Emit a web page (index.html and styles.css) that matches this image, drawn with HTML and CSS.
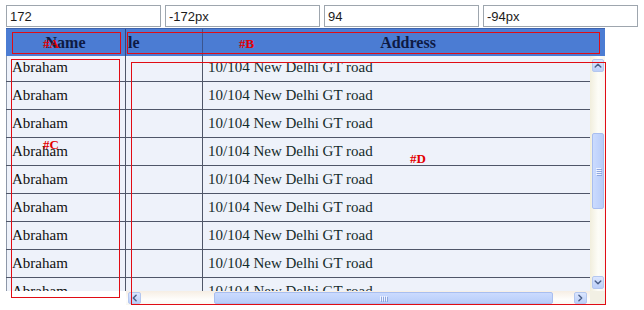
FILE: index.html
```html
<!DOCTYPE html>
<html>
<head>
<meta charset="utf-8">
<title>Frozen grid</title>
<link rel="stylesheet" href="styles.css">
</head>
<body>
<div class="page">
  <div class="controls">
    <input class="field" type="text" value="172">
    <input class="field" type="text" value="-172px">
    <input class="field" type="text" value="94">
    <input class="field" type="text" value="-94px">
  </div>

  <div class="grid">
    <div class="head">
      <div class="hcell c-name">Name</div>
      <div class="hcell c-mid">le</div>
      <div class="hcell c-addr">Address</div>
    </div>

    <div class="body">
      <div class="frozen">
        <div class="rows">
          <div class="row"><div class="cell c-name">Abraham</div></div>
          <div class="row"><div class="cell c-name">Abraham</div></div>
          <div class="row"><div class="cell c-name">Abraham</div></div>
          <div class="row"><div class="cell c-name">Abraham</div></div>
          <div class="row"><div class="cell c-name">Abraham</div></div>
          <div class="row"><div class="cell c-name">Abraham</div></div>
          <div class="row"><div class="cell c-name">Abraham</div></div>
          <div class="row"><div class="cell c-name">Abraham</div></div>
          <div class="row"><div class="cell c-name">Abraham</div></div>
        </div>
      </div>

      <div class="scroller">
        <div class="view">
          <div class="rows">
            <div class="row"><div class="cell c-mid"></div><div class="cell c-addr">10/104 New Delhi GT road</div></div>
            <div class="row"><div class="cell c-mid"></div><div class="cell c-addr">10/104 New Delhi GT road</div></div>
            <div class="row"><div class="cell c-mid"></div><div class="cell c-addr">10/104 New Delhi GT road</div></div>
            <div class="row"><div class="cell c-mid"></div><div class="cell c-addr">10/104 New Delhi GT road</div></div>
            <div class="row"><div class="cell c-mid"></div><div class="cell c-addr">10/104 New Delhi GT road</div></div>
            <div class="row"><div class="cell c-mid"></div><div class="cell c-addr">10/104 New Delhi GT road</div></div>
            <div class="row"><div class="cell c-mid"></div><div class="cell c-addr">10/104 New Delhi GT road</div></div>
            <div class="row"><div class="cell c-mid"></div><div class="cell c-addr">10/104 New Delhi GT road</div></div>
            <div class="row"><div class="cell c-mid"></div><div class="cell c-addr">10/104 New Delhi GT road</div></div>
          </div>
        </div>

        <div class="vbar">
          <span class="sbtn"><svg viewBox="0 0 10 8"><polyline points="1.5,6 5,2.5 8.5,6"/></svg></span>
          <span class="thumb thumb-v"><i></i><i></i><i></i><i></i></span>
          <span class="sbtn sbtn-end"><svg viewBox="0 0 10 8"><polyline points="1.5,2 5,5.5 8.5,2"/></svg></span>
        </div>

        <div class="hbar">
          <span class="sbtn"><svg viewBox="0 0 8 10"><polyline points="6,1.5 2.5,5 6,8.5"/></svg></span>
          <span class="thumb thumb-h"><i></i><i></i><i></i><i></i></span>
          <span class="sbtn sbtn-end"><svg viewBox="0 0 8 10"><polyline points="2,1.5 5.5,5 2,8.5"/></svg></span>
        </div>

        <div class="corner"></div>
      </div>
    </div>
  </div>

  <!-- outlined panes laid over the grid -->
  <div class="pane pane-a"><span class="tag">#A</span></div>
  <div class="pane pane-b"><span class="tag">#B</span></div>
  <div class="pane pane-c"><span class="tag">#C</span></div>
  <div class="pane pane-d"><span class="tag">#D</span></div>
</div>
</body>
</html>
```

FILE: styles.css
```css
* {
  box-sizing: border-box;
}

html, body {
  margin: 0;
  padding: 0;
  background: #ffffff;
}

.page {
  position: relative;
  width: 644px;
  height: 310px;
  padding: 5px 6px 0 6px;
}

/* offset inputs */
.controls {
  display: flex;
  gap: 4px;
}

.field {
  width: 155px;
  height: 22px;
  margin: 0;
  padding: 0 3px;
  border: 1px solid #9ea6ae;
  background: #ffffff;
  font: 13px "Liberation Sans", Arial, sans-serif;
  color: #1b1b1b;
  outline: none;
}

/* grid */
.grid {
  width: 599px;
  margin-top: 1px;
  font-family: "Liberation Serif", "Times New Roman", serif;
  font-size: 15px;
}

.head {
  display: flex;
  height: 28px;
  overflow: hidden;
  background: #4b7cd3;
  border-top: 1px solid #3d63ad;
}

.hcell {
  flex: none;
  height: 27px;
  line-height: 27px;
  font-size: 16px;
  font-weight: bold;
  color: #0e1a44;
  white-space: nowrap;
  overflow: hidden;
}

.hcell.c-name {
  width: 120px;
  text-align: center;
  border-right: 1px solid #34497c;
}

.hcell.c-mid {
  width: 77px;
  padding-left: 2px;
  border-right: 1px solid #3b558f;
}

.hcell.c-addr {
  width: 410px;
  text-align: center;
}

.body {
  display: flex;
  height: 249px;
}

.frozen {
  flex: none;
  width: 120px;
  height: 235px;
  overflow: hidden;
}

.rows {
  margin-top: -2px;
}

.row {
  display: flex;
  height: 28px;
  background: #eef2fa;
  border-bottom: 1px solid #4f5668;
}

.cell {
  height: 27px;
  line-height: 27px;
  white-space: nowrap;
  overflow: hidden;
}

.cell.c-name {
  width: 120px;
  padding-left: 5px;
  color: #111111;
  border-left: 1px solid #8d97a8;
  border-right: 1px solid #4f5668;
}

.cell.c-mid {
  flex: none;
  width: 77px;
  border-right: 1px solid #4f5668;
}

.cell.c-addr {
  flex: 1;
  padding-left: 5px;
  color: #152b2b;
}

.scroller {
  flex: none;
  width: 479px;
  display: grid;
  grid-template-columns: 464px 15px;
  grid-template-rows: 235px 14px;
}

.view {
  overflow: hidden;
  background: #eef2fa;
}

/* scrollbars */
.vbar {
  display: flex;
  flex-direction: column;
  padding: 3px 1px 2px 2px;
  background: linear-gradient(to right, #f1eedd, #fdfdf8 55%, #f7f6f0);
}

.hbar {
  display: flex;
  padding: 1px 3px 1px 2px;
  background: linear-gradient(to bottom, #f6eee4, #fefdfb 60%, #f8f7f2);
}

.corner {
  background: #f2f0e4;
}

.sbtn {
  flex: none;
  display: flex;
  align-items: center;
  justify-content: center;
  width: 12px;
  height: 13px;
  border: 1px solid #b4c7ef;
  border-radius: 2px;
  background: linear-gradient(#dbe6fe, #bccff8);
}

.hbar .sbtn {
  width: 13px;
  height: 12px;
}

.sbtn svg {
  width: 8px;
  height: 7px;
  fill: none;
  stroke: #4a5f88;
  stroke-width: 1.8;
  stroke-linecap: round;
  stroke-linejoin: round;
}

.hbar .sbtn svg {
  width: 7px;
  height: 8px;
}

.vbar .sbtn-end {
  margin-top: auto;
}

.hbar .sbtn-end {
  margin-left: auto;
}

.thumb {
  flex: none;
  display: flex;
  align-items: center;
  justify-content: center;
  gap: 1px;
  border: 1px solid #a8bef0;
  border-radius: 2px;
}

.thumb i {
  display: block;
  background: #eef3ff;
  box-shadow: 1px 1px 0 #8fa7de;
}

.thumb-v {
  flex-direction: column;
  width: 12px;
  height: 76px;
  margin-top: 61px;
  background: linear-gradient(to right, #cbdbfe, #b8cdf9);
}

.thumb-v i {
  width: 5px;
  height: 1px;
}

.thumb-h {
  width: 339px;
  height: 12px;
  margin-left: 73px;
  background: linear-gradient(#cbdbfe, #b8cdf9);
}

.thumb-h i {
  width: 1px;
  height: 5px;
}

/* outlined panes */
.pane {
  position: absolute;
  z-index: 2;
  border: 1px solid #e00c14;
}

.tag {
  position: absolute;
  font: bold 13px/13px "Liberation Serif", "Times New Roman", serif;
  color: #e30000;
  white-space: nowrap;
}

.pane-a {
  left: 12px;
  top: 32px;
  width: 109px;
  height: 22px;
}

.pane-a .tag {
  left: 30px;
  top: 4px;
}

.pane-b {
  left: 127px;
  top: 32px;
  width: 473px;
  height: 22px;
}

.pane-b .tag {
  left: 111px;
  top: 4px;
}

.pane-c {
  left: 11px;
  top: 59px;
  width: 109px;
  height: 239px;
}

.pane-c .tag {
  left: 31px;
  top: 78px;
}

.pane-d {
  left: 131px;
  top: 62px;
  width: 475px;
  height: 243px;
}

.pane-d .tag {
  left: 278px;
  top: 89px;
}
```
